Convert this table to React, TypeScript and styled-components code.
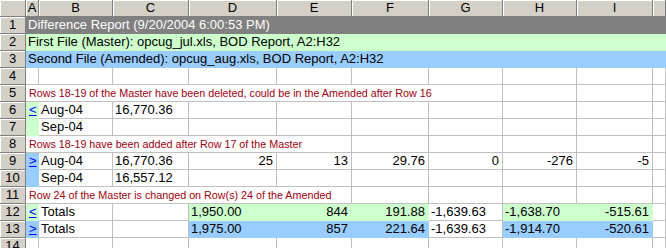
import React from "react";
import styled, { createGlobalStyle } from "styled-components";

const GlobalStyle = createGlobalStyle`
  html, body {
    margin: 0;
    padding: 0;
    background: #ffffff;
    overflow: hidden;
  }
  body {
    font-family: "Liberation Sans", Arial, sans-serif;
  }
`;

const GREEN = "#ccffcc";
const BLUE = "#99ccff";
const GRAY = "#808080";
const RED = "#a00010";

const Sheet = styled.div`
  display: grid;
  grid-template-columns: 26px 13px 74px 76px 88px 75px 77px 74px 74px 76px 13px;
  grid-auto-rows: 17px;
  width: 666px;
  height: 248px;
  overflow: hidden;
  font-size: 13px;
  color: #000000;
`;

const Head = styled.div`
  box-sizing: border-box;
  background: #d4d0c8;
  border-right: 1px solid ${GRAY};
  border-bottom: 1px solid ${GRAY};
  box-shadow: inset 1px 1px 0 #ffffff;
  text-align: center;
  line-height: 16px;
  white-space: nowrap;
  overflow: hidden;
`;

const Cell = styled.div<{ $span?: number; $fill?: string; $align?: string }>`
  box-sizing: border-box;
  grid-column: span ${(p) => p.$span ?? 1};
  background: ${(p) => p.$fill ?? "#ffffff"};
  border-right: 1px solid ${(p) => p.$fill ?? "#c0c0c0"};
  border-bottom: 1px solid ${(p) => p.$fill ?? "#c0c0c0"};
  text-align: ${(p) => p.$align ?? "left"};
  padding: 0 3px 0 2px;
  line-height: 16px;
  white-space: nowrap;
  overflow: hidden;
`;

const Title = styled(Cell)`
  color: #ffffff;
`;

const Note = styled(Cell)`
  color: ${RED};
  font-size: 10.75px;
  padding-left: 3px;
`;

const Link = styled.span`
  color: #0000ff;
  text-decoration: underline;
  padding-left: 1px;
`;

const columns = ["A", "B", "C", "D", "E", "F", "G", "H", "I", ""];

type Val = { text?: string; fill?: string; align?: string; link?: boolean };

const Blanks = ({ n }: { n: number }) => (
  <>
    {Array.from({ length: n }).map((_, i) => (
      <Cell key={i} />
    ))}
  </>
);

const DataRow = ({ num, cells }: { num: number; cells: Val[] }) => (
  <>
    <Head>{num}</Head>
    {cells.map((c, i) => (
      <Cell key={i} $fill={c.fill} $align={c.align}>
        {c.link ? <Link>{c.text}</Link> : c.text}
      </Cell>
    ))}
    <Blanks n={10 - cells.length} />
  </>
);

const NoteRow = ({ num, span, text }: { num: number; span: number; text: string }) => (
  <>
    <Head>{num}</Head>
    <Note $span={span}>{text}</Note>
    <Blanks n={10 - span} />
  </>
);

const R = "right";

export default function App() {
  return (
    <>
      <GlobalStyle />
      <Sheet>
        <Head />
        {columns.map((c, i) => (
          <Head key={i}>{c}</Head>
        ))}

        <Head>1</Head>
        <Title $span={10} $fill={GRAY}>
          Difference Report (9/20/2004 6:00:53 PM)
        </Title>
        <Head>2</Head>
        <Cell $span={10} $fill={GREEN}>
          First File (Master): opcug_jul.xls, BOD Report, A2:H32
        </Cell>
        <Head>3</Head>
        <Cell $span={10} $fill={BLUE}>
          Second File (Amended): opcug_aug.xls, BOD Report, A2:H32
        </Cell>

        <DataRow num={4} cells={[]} />
        <NoteRow
          num={5}
          span={7}
          text="Rows 18-19 of the Master have been deleted, could be in the Amended after Row 16"
        />
        <DataRow
          num={6}
          cells={[{ text: "<", fill: GREEN, link: true }, { text: "Aug-04" }, { text: "16,770.36" }]}
        />
        <DataRow num={7} cells={[{ fill: GREEN }, { text: "Sep-04" }]} />
        <NoteRow num={8} span={5} text="Rows 18-19 have been added after Row 17 of the Master" />
        <DataRow
          num={9}
          cells={[
            { text: ">", fill: BLUE, link: true },
            { text: "Aug-04" },
            { text: "16,770.36" },
            { text: "25", align: R },
            { text: "13", align: R },
            { text: "29.76", align: R },
            { text: "0", align: R },
            { text: "-276", align: R },
            { text: "-5", align: R },
          ]}
        />
        <DataRow num={10} cells={[{ fill: BLUE }, { text: "Sep-04" }, { text: "16,557.12" }]} />
        <NoteRow num={11} span={5} text="Row 24 of the Master is changed on Row(s) 24 of the Amended" />
        <DataRow
          num={12}
          cells={[
            { text: "<", fill: GREEN, link: true },
            { text: "Totals" },
            {},
            { text: "1,950.00", fill: GREEN },
            { text: "844", fill: GREEN, align: R },
            { text: "191.88", fill: GREEN, align: R },
            { text: "-1,639.63" },
            { text: "-1,638.70", fill: GREEN },
            { text: "-515.61", fill: GREEN, align: R },
          ]}
        />
        <DataRow
          num={13}
          cells={[
            { text: ">", fill: BLUE, link: true },
            { text: "Totals" },
            {},
            { text: "1,975.00", fill: BLUE },
            { text: "857", fill: BLUE, align: R },
            { text: "221.64", fill: BLUE, align: R },
            { text: "-1,639.63" },
            { text: "-1,914.70", fill: BLUE },
            { text: "-520.61", fill: BLUE, align: R },
          ]}
        />
        <DataRow num={14} cells={[]} />
      </Sheet>
    </>
  );
}
